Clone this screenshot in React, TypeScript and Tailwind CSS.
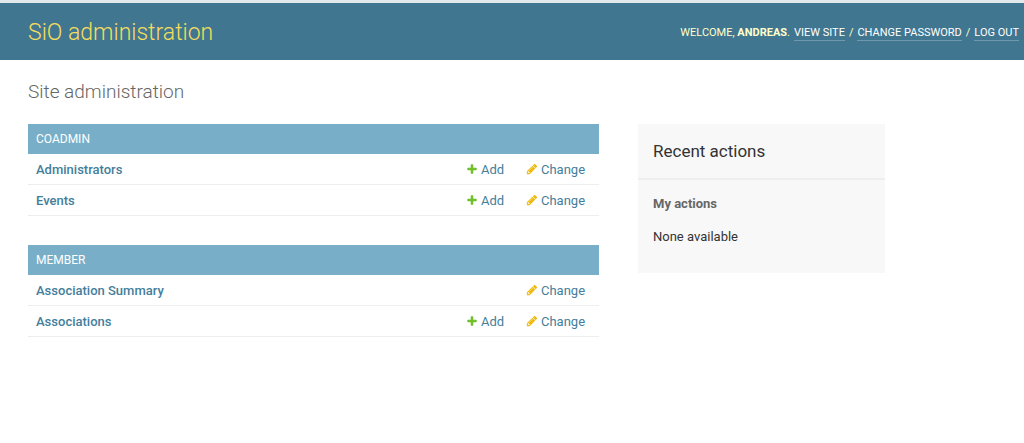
import React from 'react';

interface IconLinkProps {
    label: string;
    model: string;
    color: string;
    path: string;
}

interface ModelRow {
    name: string;
    canAdd: boolean;
}

interface AppModuleProps {
    title: string;
    models: ModelRow[];
}

const plusPath =
    'M1600 796v192q0 40-28 68t-68 28h-416v416q0 40-28 68t-68 28H800q-40 0-68-28t-28-68v-416H288q-40 0-68-28t-28-68V796q0-40 28-68t68-28h416V284q0-40 28-68t68-28h192q40 0 68 28t28 68v416h416q40 0 68 28t28 68z';
const pencilPath =
    'M491 1536l91-91-235-235-91 91v107h128v128h107zm523-928q0-22-22-22-10 0-17 7l-542 542q-7 7-7 17 0 22 22 22 10 0 17-7l542-542q7-7 7-17zm-54-192l416 416-832 832H128v-416zm683 96q0 53-37 90l-166 166-416-416 166-165q36-38 90-38 53 0 91 38l235 234q37 39 37 91z';

const IconLink: React.FC<IconLinkProps> = ({ label, model, color, path }) => (
    <a href="#" title={`${label} ${model}`} className="flex items-center gap-[3px] text-[#447e9b]">
        <svg viewBox="0 0 1792 1792" className="mb-0.5 h-3 w-3" fill={color} aria-hidden="true">
            <path d={path} />
        </svg>
        {label}
    </a>
);

const AppModule: React.FC<AppModuleProps> = ({ title, models }) => (
    <table className="w-full table-fixed border-collapse text-[13px] leading-4">
        <caption className="bg-[#79aec8] px-2 py-[7px] text-left text-xs leading-4 text-white uppercase">
            <a href="#">{title}</a>
        </caption>
        <tbody>
            {models.map((row) => (
                <tr key={row.name} className="border-b border-[#eeeeee]">
                    <th scope="row" className="px-2 pt-2 pb-1.5 text-left font-medium">
                        <a href="#" className="text-[#447e9b]">{row.name}</a>
                    </th>
                    <td className="w-[60px] pt-2 pb-1.5">
                        {row.canAdd && <IconLink label="Add" model={row.name} color="#70bf2b" path={plusPath} />}
                    </td>
                    <td className="w-[73px] pt-2 pb-1.5">
                        <IconLink label="Change" model={row.name} color="#efb80b" path={pencilPath} />
                    </td>
                </tr>
            ))}
        </tbody>
    </table>
);

const App: React.FC = () => {
    const userLinks = ['View site', 'Change password', 'Log out'];

    return (
        <div className="min-h-screen bg-white font-[Roboto,sans-serif] text-[13px] text-[#333333]">
            <header className="flex items-center justify-between border-t-3 border-[#e4e9ee] bg-[#417690] pt-3.5 pr-[5px] pb-[11px] pl-7">
                <h1 className="text-[23px] leading-8 font-light">
                    <a href="#" className="text-[#f5dd5d]">SiO administration</a>
                </h1>
                <div className="flex text-[11px] leading-[14px] text-[#ffffcc] uppercase">
                    <span className="mr-1">Welcome, <strong>Andreas</strong>.</span>
                    <nav className="flex">
                        {userLinks.map((link, i) => (
                            <React.Fragment key={link}>
                                {i > 0 && <span className="mx-1">/</span>}
                                <a href="#" className="border-b border-white/25 text-white">{link}</a>
                            </React.Fragment>
                        ))}
                    </nav>
                </div>
            </header>
            <main className="px-7 pt-5">
                <h2 className="text-[19px] leading-6 font-light text-[#666666]">Site administration</h2>
                <div className="mt-5 flex items-start gap-[39px]">
                    <div className="flex max-w-[571px] flex-1 flex-col gap-[29px]">
                        <AppModule
                            title="Coadmin"
                            models={[{ name: 'Administrators', canAdd: true }, { name: 'Events', canAdd: true }]}
                        />
                        <AppModule
                            title="Member"
                            models={[{ name: 'Association Summary', canAdd: false }, { name: 'Associations', canAdd: true }]}
                        />
                    </div>
                    <aside className="w-[247px] bg-[#f8f8f8]">
                        <h2 className="border-b-2 border-[#eeeeee] px-[15px] py-[15px] text-[17px] leading-6">Recent actions</h2>
                        <div className="px-[15px] pt-4 pb-7">
                            <h3 className="leading-4 font-bold text-[#666666]">My actions</h3>
                            <p className="mt-[17px] leading-4">None available</p>
                        </div>
                    </aside>
                </div>
            </main>
        </div>
    );
};

export default App;
